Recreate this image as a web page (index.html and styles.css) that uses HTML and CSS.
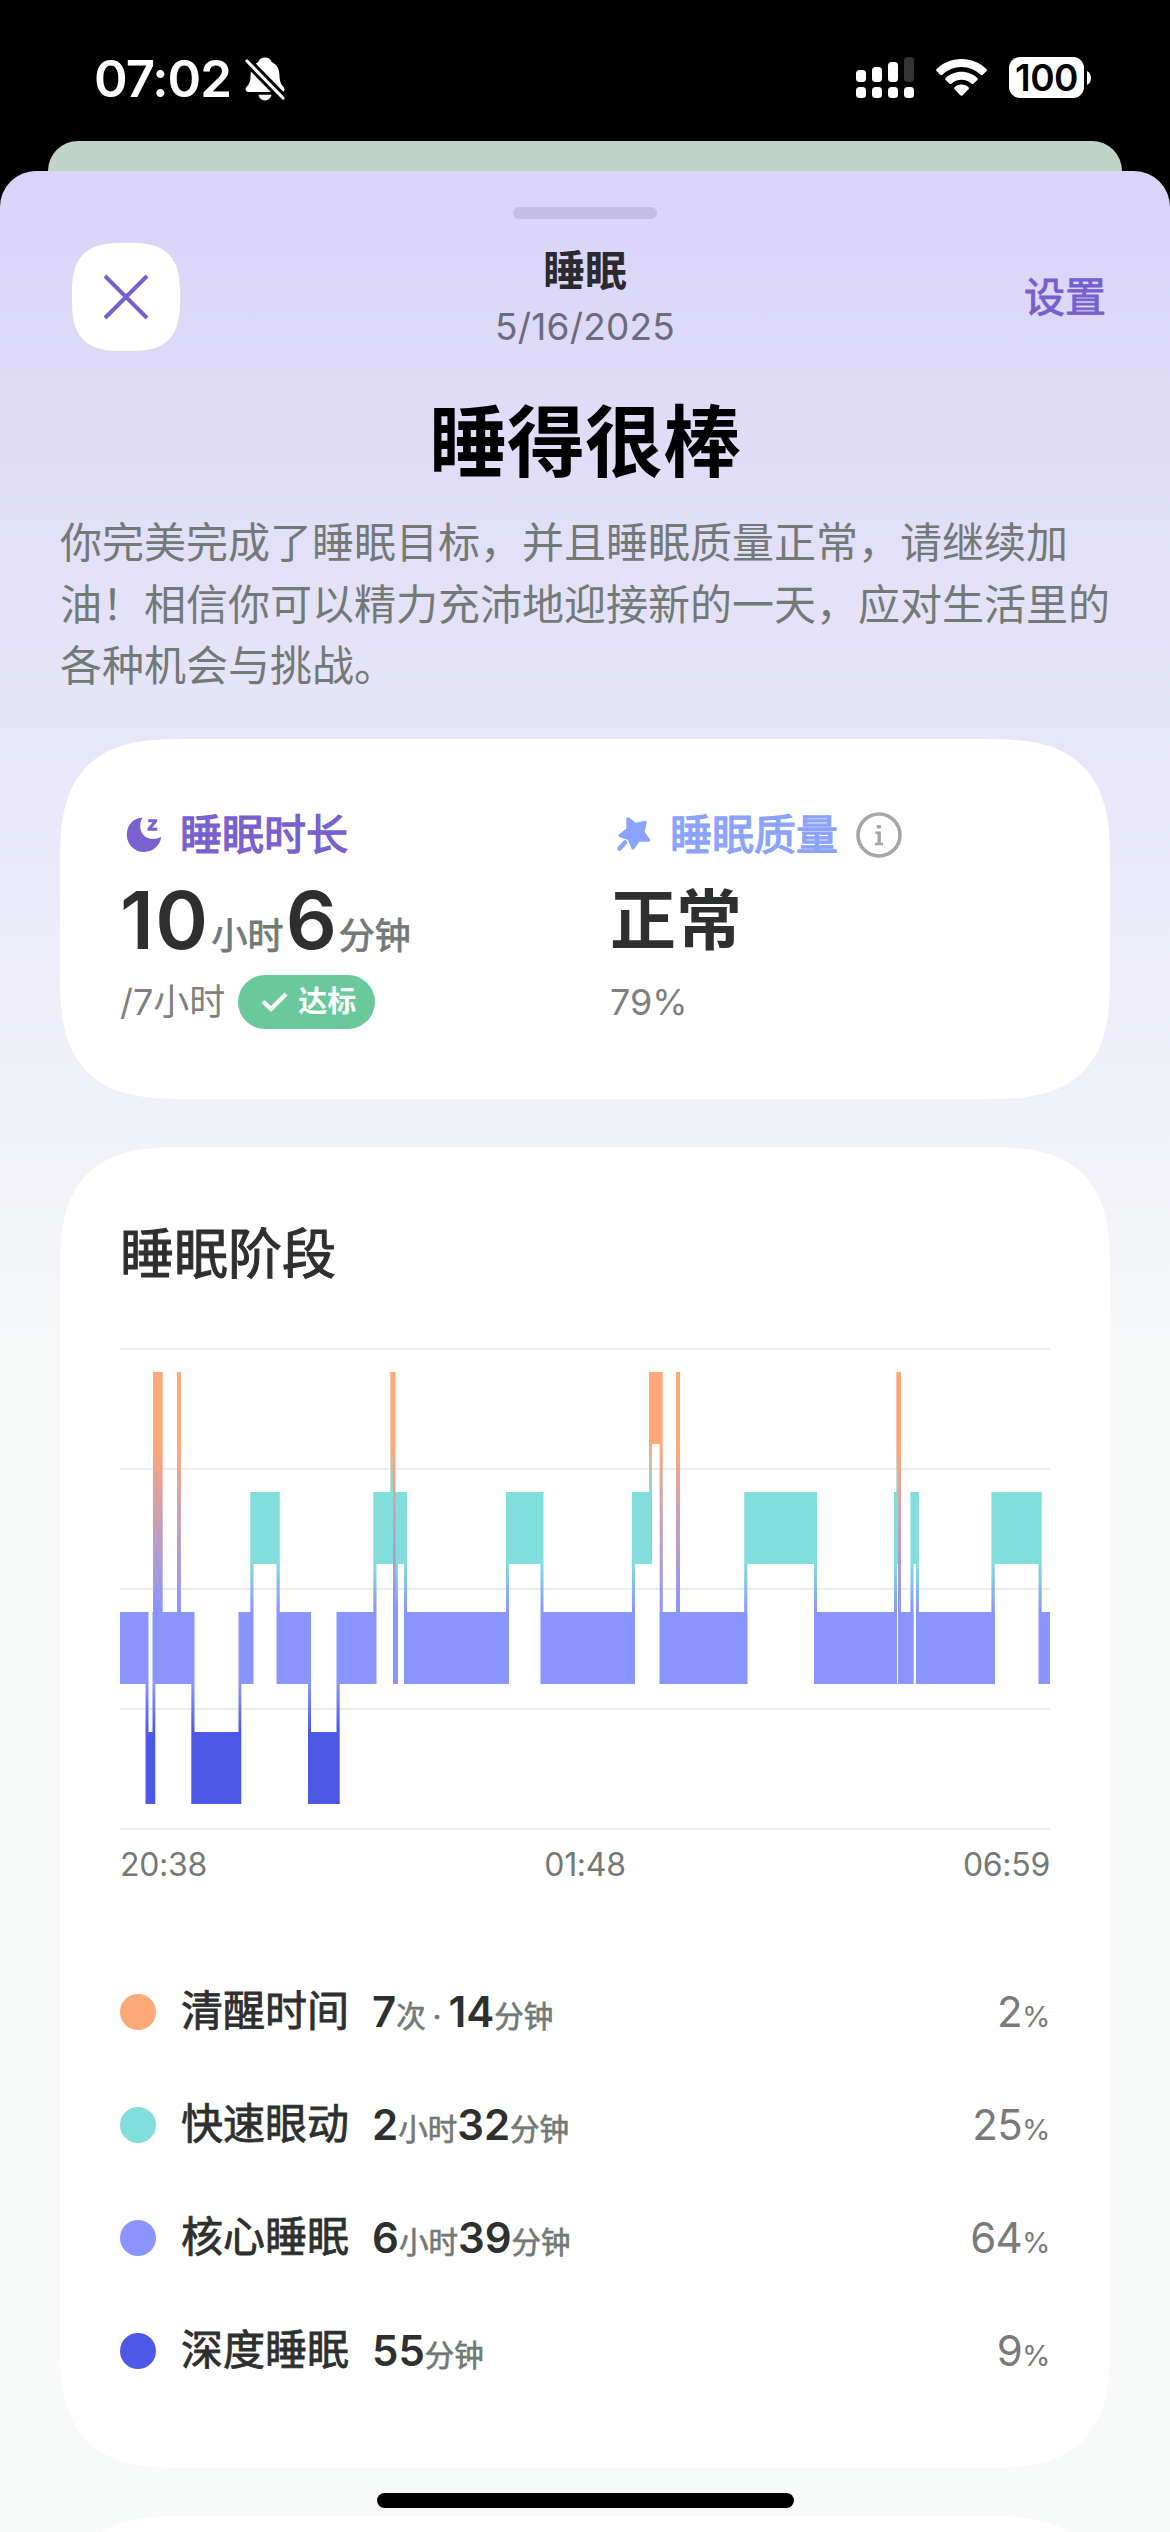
FILE: index.html
```html
<!DOCTYPE html>
<html lang="zh-CN">
<head>
<meta charset="utf-8">
<title>睡眠</title>
<link rel="stylesheet" href="styles.css">
</head>
<body>
<div class="phone">
  <div class="statusbar">
    <div class="status-left">
      <span class="clock">07:02</span>
      <svg class="bell" width="40" height="44" viewBox="0 0 40 44">
        <path fill="#fff" d="M20 0.5c3.600 0 6 2 6.700 4.600 5.200 2.400 7.500 7 7.700 12.400.2 7 1.500 9.800 4 12.200 1.800 1.900 1.500 5.300-1.600 5.300H3.600C.5 35-.3 31.900 1.600 29.700c2.700-2.600 4-5.200 4-12.200.2-5.400 2.500-10 7.700-12.400C14 2.500 16.400.5 20 .5zM13.500 37.800h13c-.5 3.300-3.200 5.700-6.500 5.700s-6-2.400-6.500-5.700z"/>
        <path stroke="#000" stroke-width="9" d="M-1 1l42 43"/>
        <path stroke="#fff" stroke-width="3.200" stroke-linecap="round" d="M2 4l36 37"/>
      </svg>
    </div>
    <div class="status-right">
      <svg width="58" height="42" viewBox="0 0 58 42" fill="#fff">
        <rect x="0" y="13" width="10" height="12" rx="3.500"/><rect x="16" y="10" width="10" height="15" rx="3.500"/>
        <rect x="32" y="5" width="10" height="20" rx="3.500"/><rect x="48" y="0" width="10" height="25" rx="3.500" fill="#333"/>
        <rect x="0" y="30" width="10" height="11" rx="3.500"/><rect x="16" y="30" width="10" height="11" rx="3.500"/>
        <rect x="32" y="30" width="10" height="11" rx="3.500"/><rect x="48" y="30" width="10" height="11" rx="3.500"/>
      </svg>
      <svg class="wifi" width="51" height="38" viewBox="0 0 51 38" fill="#fff">
        <path d="M25.500 0C35.300 0 44 3.700 50.300 10c.7.700.7 1.500 0 2.200l-3.500 3.500c-.7.700-1.500.6-2.200 0C39.600 10.900 33 7.900 25.500 7.900S11.400 10.900 6.400 15.700c-.7.600-1.500.7-2.200 0L.7 12.200c-.7-.7-.7-1.500 0-2.200C7 3.700 15.700 0 25.500 0z"/>
        <path d="M25.500 12.700c6.100 0 11.600 2.300 15.800 6.200.7.700.7 1.500 0 2.200l-3.600 3.500c-.7.700-1.500.6-2.200.1-2.700-2.500-6.200-4-10-4s-7.300 1.500-10 4c-.7.500-1.500.6-2.200-.1l-3.600-3.500c-.7-.7-.7-1.500 0-2.200 4.200-3.900 9.700-6.200 15.800-6.200z"/>
        <path d="M25.500 25.500c2.700 0 5.100 1 7 2.700.7.700.7 1.400 0 2.100l-5.900 5.900c-.8.800-1.400.8-2.200 0l-5.900-5.900c-.7-.7-.7-1.400 0-2.100 1.900-1.700 4.300-2.700 7-2.700z"/>
      </svg>
      <span class="battery">100</span>
      <svg class="nub" width="4" height="14" viewBox="0 0 4 14"><path fill="#fff" d="M0 0c2.600 1.200 4 3.900 4 7s-1.400 5.800-4 7z"/></svg>
    </div>
  </div>
  <div class="back-sheet"></div>
  <main class="sheet">
    <div class="grabber"></div>
    <header class="topbar">
      <button class="close" aria-label="关闭">
        <svg width="48" height="48" viewBox="0 0 48 48"><path stroke="#7560cf" stroke-width="4" d="M3 3l42 42M45 3L3 45"/></svg>
      </button>
      <div class="heading">
        <div class="heading-title">睡眠</div>
        <div class="heading-date">5/16/2025</div>
      </div>
      <a class="settings">设置</a>
    </header>
    <h1 class="headline">睡得很棒</h1>
    <p class="summary">你完美完成了睡眠目标，并且睡眠质量正常，请继续加油！相信你可以精力充沛地迎接新的一天，应对生活里的各种机会与挑战。</p>

    <section class="card metrics">
      <div class="metric">
        <div class="metric-name duration">
          <svg width="48" height="48" viewBox="0 0 48 48" fill="#7861cf">
            <path d="M22.500 6.500C12.700 7 6.800 14.800 6.800 23.700c0 9.600 7.700 17.300 17.200 17.300 9 0 16.500-6.600 17.100-14.900-2.300 1.200-5.100 1.900-7.700 1.900-8 0-13.200-5.600-13.200-12.800 0-3.300.8-6.300 2.300-8.700z"/>
            <path d="M28.200 8.200h9v2.600l-5.100 6h5.200v3h-9.800v-2.600l5.200-6h-4.500z"/>
          </svg>
          <span>睡眠时长</span>
        </div>
        <div class="metric-value"><span class="hours">10</span><span class="unit">小时</span><span>6</span><span class="unit">分钟</span></div>
        <div class="metric-note"><span>/7小时</span>
          <span class="pill"><svg width="27" height="20" viewBox="0 0 27 20"><path fill="none" stroke="#fff" stroke-width="4.200" d="M2 9.500l8 7.500L25 2"/></svg>达标</span>
        </div>
      </div>
      <div class="metric">
        <div class="metric-name quality">
          <svg width="48" height="48" viewBox="0 0 48 48" fill="#8ba3ff" stroke="#8ba3ff" stroke-linejoin="round" stroke-linecap="round">
            <path stroke-width="3.500" d="M18 8l7.500 5.800 9.500-2.300-2.300 9.500 5.700 8-9.800-.3-5.600 8-3.800-9.100-8.900-3 7.700-6.300z"/>
            <path stroke-width="4.500" d="M9.500 37.500l5.500-6"/>
          </svg>
          <span>睡眠质量</span>
          <svg class="info" width="46" height="46" viewBox="0 0 46 46">
            <circle cx="23" cy="23" r="21" fill="none" stroke="#a6a6a6" stroke-width="3.600"/>
            <path fill="#a6a6a6" d="M20.700 13h4.200v3.500h-4.200zM19.300 19.500h5.600v11.200H27v2.600h-8v-2.600h2.500v-8.500h-2.200z"/>
          </svg>
        </div>
        <div class="metric-value word">正常</div>
        <div class="metric-note"><span>79%</span></div>
      </div>
    </section>

    <section class="card stages">
      <h2 class="stages-title">睡眠阶段</h2>
      <svg class="chart" width="930" height="482" viewBox="0 0 930 482">
        <defs>
          <linearGradient id="awakeCore" gradientUnits="userSpaceOnUse" x1="0" y1="96" x2="0" y2="264"><stop offset="0" stop-color="#ffa878"/><stop offset="1" stop-color="#8a95ff"/></linearGradient>
          <linearGradient id="awakeRem" gradientUnits="userSpaceOnUse" x1="0" y1="96" x2="0" y2="144"><stop offset="0" stop-color="#ffa878"/><stop offset="1" stop-color="#82dedc"/></linearGradient>
          <linearGradient id="remCore" gradientUnits="userSpaceOnUse" x1="0" y1="216" x2="0" y2="264"><stop offset="0" stop-color="#82dedc"/><stop offset="1" stop-color="#8a95ff"/></linearGradient>
          <linearGradient id="coreDeep" gradientUnits="userSpaceOnUse" x1="0" y1="336" x2="0" y2="384"><stop offset="0" stop-color="#8a95ff"/><stop offset="1" stop-color="#4d58e6"/></linearGradient>
        </defs>
        <path stroke="#e9e9e9" stroke-width="1.700" d="M0 1h930M0 121h930M0 241h930M0 361h930M0 481h930"/>
        <path fill="#8a95ff" d="M0 264h28.500v72H0zM32.500 264h42v72h-42zM118.500 264h15v72h-15zM156.500 264h34.500v72h-34.500zM216.500 264h40v72h-40zM273 264h5v72h-5zM284 264h105v72H284zM420.500 264H515v72h-94.500zM539.500 264h88v72h-88zM694 264h83v72h-83zM778 264h15.700v72H778zM796 264h79v72h-79zM918.500 264H930v72h-11.500z"/>
        <path fill="#4d58e6" d="M25.500 384h9.800v72h-9.800zM71.300 384h50v72h-50zM188 384h31.700v72H188z"/>
        <path fill="#82dedc" d="M130.300 144h29.500v72h-29.500zM253.300 144H287v72h-33.700zM386 144h37.500v72H386zM511.900 144H532v72h-20.100zM624.200 144H697v72h-72.800zM774 144h4v72h-4zM790.400 144h8.500v72h-8.500zM871.400 144h50.300v72h-50.300z"/>
        <path fill="url(#coreDeep)" d="M25.500 336h3v48h-3zM32.500 336h2.800v48h-2.800zM71.300 336h3.200v48h-3.200zM118.500 336h2.800v48h-2.800zM188 336h3v48h-3zM216.500 336h3.200v48h-3.200z"/>
        <path fill="url(#remCore)" d="M130.300 216h3.200v48h-3.200zM156.500 216h3.300v48h-3.300zM253.300 216h3.200v48h-3.200zM275 216h3v48h-3zM284 216h3v48h-3zM386 216h3v48h-3zM420.500 216h3v48h-3zM511.900 216h3.100v48h-3.100zM624.200 216h3.100v48h-3.100zM694 216h3v48h-3zM774 216h3v48h-3zM790.400 216h3.100v48h-3.100zM796 216h2.900v48H796zM871.400 216h3.400v48h-3.400zM918.500 216h3.200v48h-3.200z"/>
        <path fill="url(#awakeRem)" d="M270.300 24h3v120h-3zM529 24h3v120h-3zM776.300 24h2v120h-2z"/>
        <path fill="#ffa878" d="M529 24h13.700v72H529z"/>
        <path fill="url(#awakeCore)" d="M33 24h9.700v240H33zM57 24h3.900v240H57zM273 24h2.500v240H273zM539.700 96h3v168h-3zM556 24h4v240h-4zM778 24h3v240h-3z"/>
      </svg>
      <div class="axis"><span>20:38</span><span>01:48</span><span>06:59</span></div>
      <ul class="legend">
        <li><i class="dot awake"></i><span class="stage">清醒时间</span><span class="amount">7<small class="count">次 · </small>14<small>分钟</small></span><span class="share">2<small>%</small></span></li>
        <li><i class="dot rem"></i><span class="stage">快速眼动</span><span class="amount">2<small>小时</small>32<small>分钟</small></span><span class="share">25<small>%</small></span></li>
        <li><i class="dot core"></i><span class="stage">核心睡眠</span><span class="amount">6<small>小时</small>39<small>分钟</small></span><span class="share">64<small>%</small></span></li>
        <li><i class="dot deep"></i><span class="stage">深度睡眠</span><span class="amount">55<small>分钟</small></span><span class="share">9<small>%</small></span></li>
      </ul>
    </section>
    <section class="card next"></section>
  </main>
  <div class="home-indicator"></div>
</div>
</body>
</html>
```

FILE: styles.css
```css
* { box-sizing: border-box; margin: 0; padding: 0; }
body { background: #000; font-family: Inter, "Noto Sans CJK SC", sans-serif; color: #2e302f; }
svg { display: block; flex: none; }
.phone { position: relative; width: 1170px; height: 2532px; overflow: hidden; display: flex; flex-direction: column; background: #000; }

.statusbar { height: 141px; flex: none; display: flex; justify-content: space-between; padding: 57px 79px 0 94px; color: #fff; }
.status-left { display: flex; height: 44px; }
.clock { width: 151px; font-size: 51px; font-weight: 600; line-height: 43px; letter-spacing: -1px; }
.status-right { display: flex; height: 42px; }
.wifi { margin: 2px 22px 0 22px; }
.battery { width: 75px; height: 41px; border-radius: 11px; background: #fff; color: #000; font-size: 37px; font-weight: 600; line-height: 41px; text-align: center; letter-spacing: -.5px; }
.nub { margin: 14px 0 0 3px; }

.back-sheet { flex: none; height: 30px; margin: 0 48px; background: #bfd3c9; border-radius: 32px 32px 0 0; }
.sheet { flex: none; height: 2361px; overflow: hidden; border-radius: 36px 36px 0 0; padding: 36px 60px 0; background: linear-gradient(#d9d4f8, #f8faf9 1230px); }
.grabber { width: 144px; height: 12px; margin: 0 auto; border-radius: 6px; background: #c4bfe0; }
.topbar { display: grid; grid-template-columns: 200px 1fr 200px; height: 132px; padding: 24px 4px 0 12px; }
.close { display: flex; align-items: center; justify-content: center; width: 108px; height: 108px; border: 0; border-radius: 36px; background: #fff; }
.heading { text-align: center; margin-left: -8px; }
.heading-title { font-size: 42px; font-weight: 700; line-height: 55px; color: #2b2a30; }
.heading-date { font-size: 37px; line-height: 57px; color: #6d6a7b; letter-spacing: .2px; }
.settings { justify-self: end; font-size: 41px; line-height: 109px; color: #7560cf; -webkit-text-stroke: .9px; }
.headline { margin-top: 45px; font-size: 78px; line-height: 94px; text-align: center; color: #000; font-weight: 700; }
.summary { margin-top: 22px; font-size: 42px; line-height: 61.500px; color: #737a76; }

.card { background: #fff; border-radius: 92px; padding: 69px 60px 60px; }
@supports (corner-shape: squircle) {
  .card { border-radius: 125px; corner-shape: superellipse(1.500); }
  .close { border-radius: 52px; corner-shape: superellipse(1.500); }
}
.metrics { display: grid; grid-template-columns: 490px 1fr; height: 360px; margin-top: 42px; }
.metric-name { display: flex; align-items: center; height: 54px; font-size: 42px; gap: 12px; }
.metric-name span { -webkit-text-stroke: 1.300px; line-height: 54px; }
.duration { color: #7861cf; }
.quality { color: #8ba3ff; }
.info { margin-left: 6px; }
.metric-value { height: 113px; font-size: 80px; line-height: 115px; font-weight: 600; white-space: nowrap; }
.hours { letter-spacing: 1.500px; }
.word { font-size: 66px; font-weight: 700; line-height: 117px; }
.unit { font-size: 36px; font-weight: 400; line-height: 1; color: #737a76; margin: 0 2px; -webkit-text-stroke: .9px; }
.metric-note { display: flex; align-items: center; height: 54px; line-height: 50px; font-size: 36px; color: #808080; gap: 13px; }
.pill { display: flex; align-items: center; gap: 10px; width: 137px; height: 54px; padding-left: 23px; border-radius: 27px; background: #69c99b; color: #fff; font-size: 29px; font-weight: 700; white-space: nowrap; }

.stages { margin-top: 48px; height: 1321px; }
.stages-title { font-size: 54px; line-height: 77px; height: 72px; font-weight: 400; -webkit-text-stroke: 1.100px; }
.chart { margin-top: 60px; }
.axis { display: flex; justify-content: space-between; height: 68px; line-height: 70px; font-size: 32px; letter-spacing: -.3px; color: #737a76; }
.legend { list-style: none; margin-top: 58px; }
.legend li { display: flex; align-items: center; height: 113px; }
.dot { width: 36px; height: 36px; border-radius: 50%; margin-right: 25px; }
.awake { background: #ffa878; }
.rem { background: #82dedc; }
.core { background: #8a95ff; }
.deep { background: #4d58e6; }
.stage { font-size: 42px; line-height: 60px; padding-bottom: 3px; margin-right: 23px; -webkit-text-stroke: .8px; }
.amount { font-size: 42px; font-weight: 600; line-height: 60px; }
.amount small { font-size: 29.500px; font-weight: 400; line-height: 1; color: #737a76; -webkit-text-stroke: .7px; }
.amount .count { letter-spacing: -.6px; }
.share { margin-left: auto; font-size: 42px; line-height: 60px; letter-spacing: -.6px; color: #7a7a7a; }
.share small { font-size: 29px; line-height: 1; }
.next { margin-top: 48px; height: 300px; }
.home-indicator { position: absolute; left: 377px; bottom: 24px; width: 417px; height: 15px; border-radius: 8px; background: #000; }
```
